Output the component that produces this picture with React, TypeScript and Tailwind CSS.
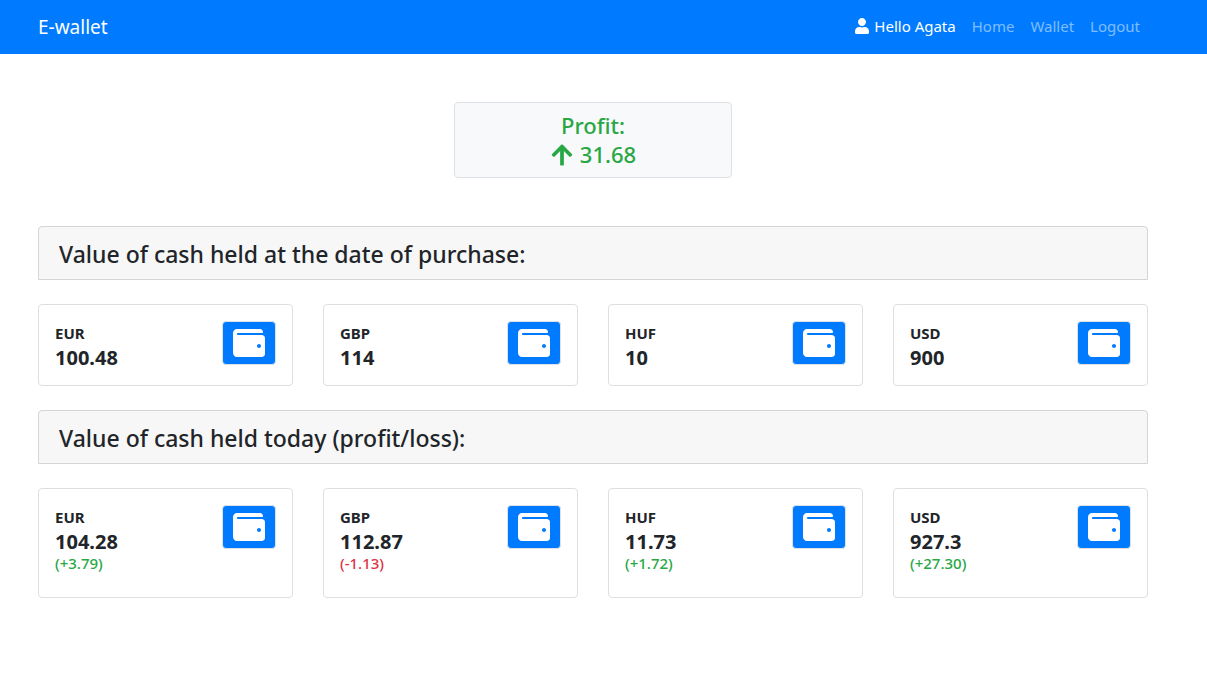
import React from 'react';
import { FaArrowUp, FaUser, FaWallet } from 'react-icons/fa';

interface Holding {
  currency: string;
  value: string;
  change?: string;
}

const purchased: Holding[] = [
  { currency: 'EUR', value: '100.48' },
  { currency: 'GBP', value: '114' },
  { currency: 'HUF', value: '10' },
  { currency: 'USD', value: '900' },
];

const today: Holding[] = [
  { currency: 'EUR', value: '104.28', change: '+3.79' },
  { currency: 'GBP', value: '112.87', change: '-1.13' },
  { currency: 'HUF', value: '11.73', change: '+1.72' },
  { currency: 'USD', value: '927.3', change: '+27.30' },
];

function HoldingCard({ currency, value, change }: Holding) {
  const tone = change?.startsWith('-') ? 'text-[#dc3545]' : 'text-[#28a745]';
  return (
    <article className="flex items-start justify-between rounded-sm border border-[#dfdfdf] bg-white px-4 pt-4 pb-3.5">
      <div>
        <h3 className="text-[15px] leading-6 font-bold">{currency}</h3>
        <p className="text-xl leading-[26px] font-bold">{value}</p>
        {change && <p className={`pb-3 text-[15px] leading-4 font-medium ${tone}`}>({change})</p>}
      </div>
      <div className="flex h-11 items-center rounded-sm border border-[#dee2e6] bg-[#007bff] px-[10px] text-white">
        <FaWallet className="size-8" aria-hidden="true" />
      </div>
    </article>
  );
}

function Holdings({ title, items }: { title: string; items: Holding[] }) {
  return (
    <section className="mb-6">
      <h2 className="mb-6 rounded-t-sm border border-[#d4d5d6] bg-[#f7f7f7] px-5 pt-[13px] pb-[11px] text-[23px] leading-7 font-medium">
        {title}
      </h2>
      <div className="grid grid-cols-4 gap-[30px]">
        {items.map((item) => (
          <HoldingCard key={item.currency} {...item} />
        ))}
      </div>
    </section>
  );
}

export default function App() {
  return (
    <div className="font-['Noto_Sans','Open_Sans',sans-serif] text-[#212529]">
      <header className="flex h-[54px] items-center justify-between bg-[#007bff] pr-[67px] pl-[38px]">
        <a href="#" className="text-[19px] leading-7 text-white">E-wallet</a>
        <nav className="flex items-center gap-4 pb-0.5 text-[15px] leading-6 text-white/50">
          <span className="flex items-center gap-1 text-white">
            <FaUser className="size-4" aria-hidden="true" />
            Hello Agata
          </span>
          <a href="#home">Home</a>
          <a href="#wallet">Wallet</a>
          <a href="#logout">Logout</a>
        </nav>
      </header>
      <main className="pt-12 pr-[59px] pl-[38px]">
        <div className="mx-auto mb-12 w-1/4 rounded-sm border border-[#dee2e6] bg-[#f8f9fa] py-2 text-center text-[22px] leading-[29px] font-medium text-[#28a745]">
          <p>Profit:</p>
          <p className="flex items-center justify-center gap-1.5">
            <FaArrowUp className="size-6" aria-hidden="true" />
            31.68
          </p>
        </div>
        <Holdings title="Value of cash held at the date of purchase:" items={purchased} />
        <Holdings title="Value of cash held today (profit/loss):" items={today} />
      </main>
    </div>
  );
}
